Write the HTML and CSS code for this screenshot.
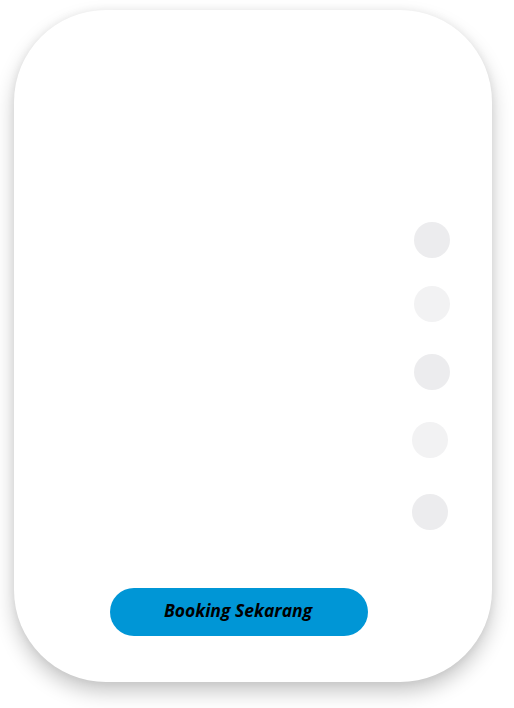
FILE: index.html
```html
<!DOCTYPE html>
<html lang="id">
<head>
    <meta charset="UTF-8">
    <title>Booking</title>

    <link rel="stylesheet" href="styles.css">
</head>
<body>
    <div class="card">
        <div class="dots">
            <span class="dot dark"></span>
            <span class="dot light"></span>
            <span class="dot dark"></span>
            <span class="dot light shift"></span>
            <span class="dot dark shift"></span>
        </div>

        <button class="booking">Booking Sekarang</button>
    </div>
</body>
</html>
```

FILE: styles.css
```css
html, body {
    height: 100%;
}
body {
    margin: 0;
    padding: 10px 0 26px 14px;
    box-sizing: border-box;
    background: #fff;
    font-family: "Open Sans", "Liberation Sans", sans-serif;
}

.card {
    width: 478px;
    height: 672px;
    box-sizing: border-box;
    padding-top: 212px;
    background: #fff;
    border-radius: 92px;
    box-shadow: 0 10px 20px rgba(0, 0, 0, 0.22), 0 0 8px rgba(0, 0, 0, 0.06);
    display: flex;
    flex-direction: column;
}

.dots {
    display: flex;
    flex-direction: column;
    align-items: flex-end;
    padding-right: 42px;
}

.dot {
    width: 36px;
    height: 36px;
    border-radius: 50%;
}
.dot + .dot { margin-top: 32px; }
.dot:nth-child(2) { margin-top: 28px; }
.dot:nth-child(5) { margin-top: 36px; }

.dark  { background: #ececee; }
.light { background: #f2f2f3; }
.shift { margin-right: 2px; }

.booking {
    margin: auto 0 46px 96px;
    width: 258px;
    height: 48px;
    border: none;
    border-radius: 24px;
    background: #0096d6;
    color: #000;
    font: italic bold 17.5px/44px "Open Sans", "Liberation Sans", sans-serif;
    padding: 0 2px 4px 0;
    text-align: center;
}
```
